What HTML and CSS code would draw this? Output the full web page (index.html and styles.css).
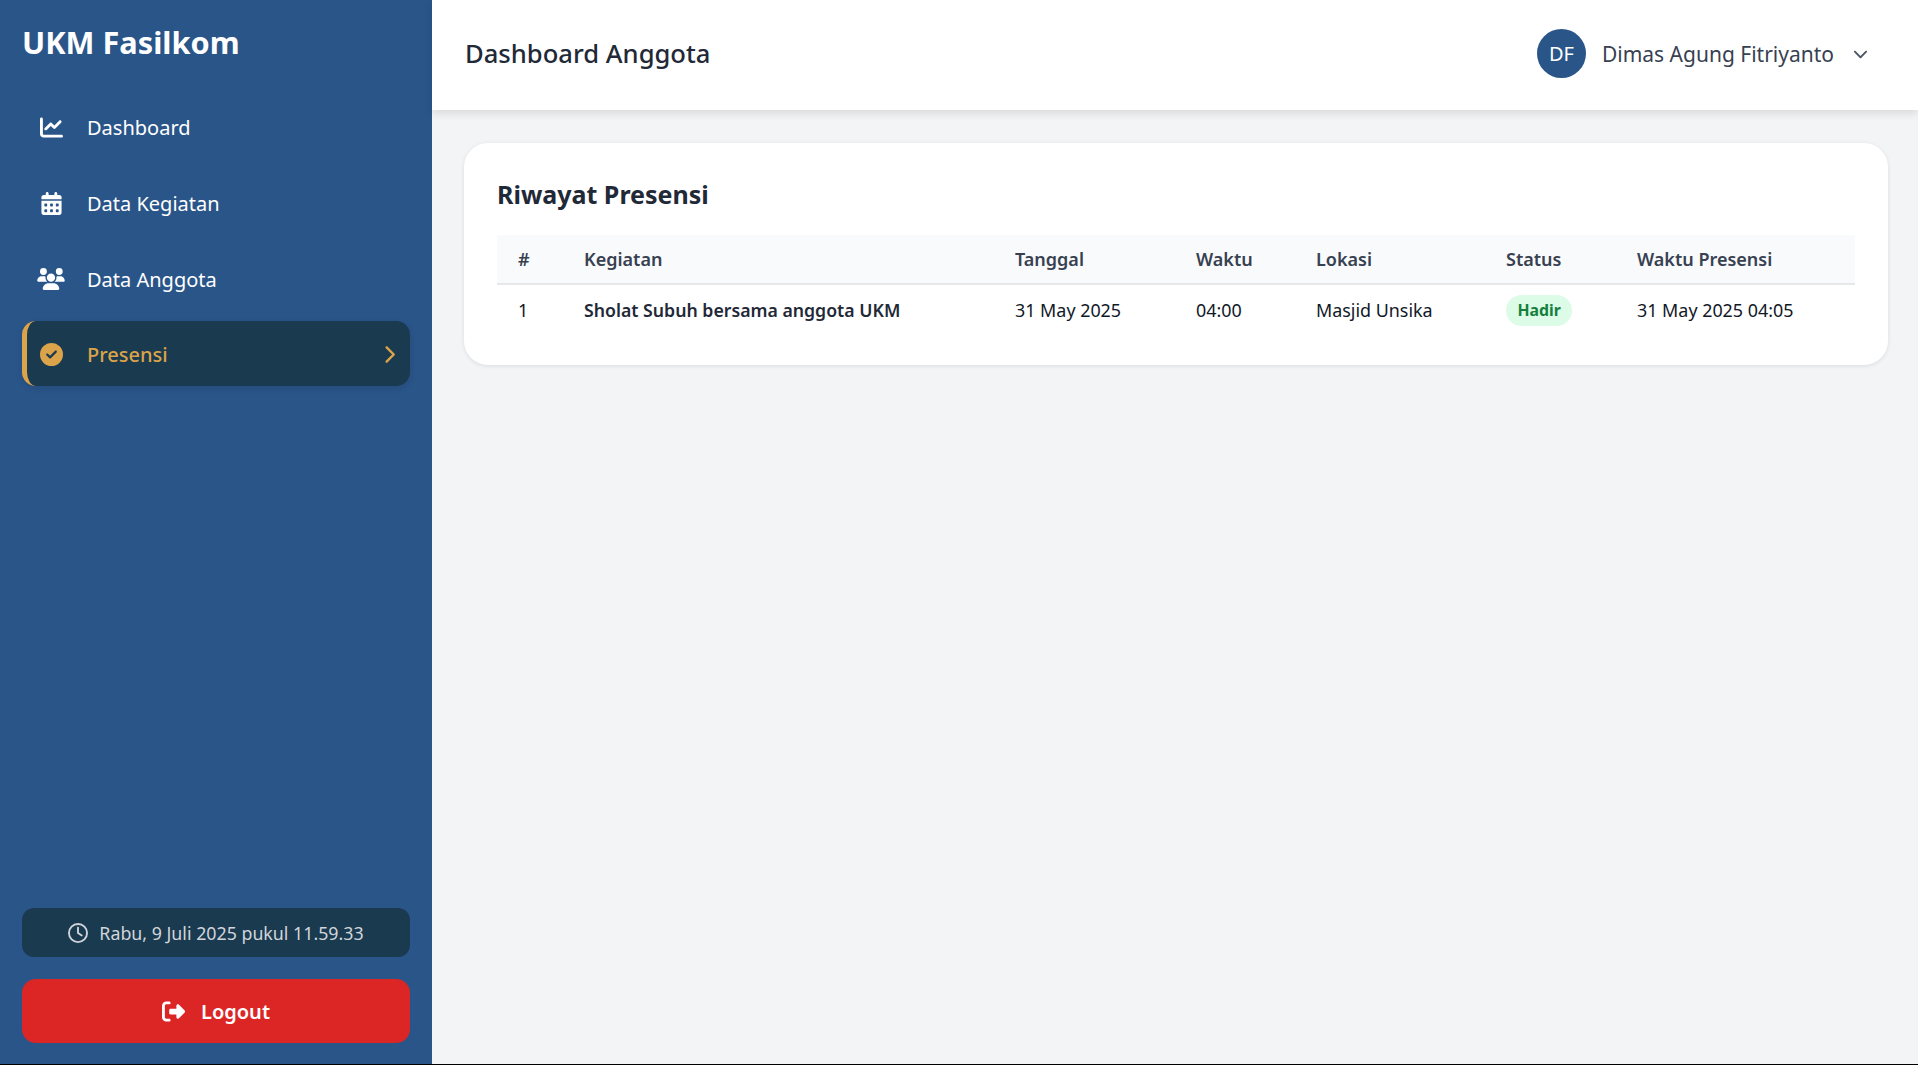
FILE: index.html
```html
<!DOCTYPE html>
<html lang="en">
<head>
    <meta charset="UTF-8">
    <meta name="viewport" content="width=device-width, initial-scale=1.0">
    <title>Dashboard Anggota</title>
    <link rel="stylesheet" href="styles.css">
</head>
<body>
    <div class="layout">
        <aside class="sidebar">
            <div class="brand">UKM Fasilkom</div>
            <nav class="nav">
                <a class="nav-item">
                    <span class="nav-icon">
                        <svg class="icon-chart" viewBox="0 0 512 512"><path d="M64 64c0-17.7-14.3-32-32-32S0 46.3 0 64V400c0 44.2 35.8 80 80 80H480c17.7 0 32-14.3 32-32s-14.3-32-32-32H80c-8.8 0-16-7.2-16-16V64zm406.6 86.6c12.5-12.5 12.5-32.8 0-45.3s-32.8-12.5-45.3 0L320 210.7l-57.4-57.4c-12.5-12.5-32.8-12.5-45.3 0l-112 112c-12.5 12.5-12.5 32.8 0 45.3s32.8 12.5 45.3 0L240 221.3l57.4 57.4c12.5 12.5 32.8 12.5 45.3 0l128-128z"/></svg>
                    </span>
                    <span>Dashboard</span>
                </a>
                <a class="nav-item">
                    <span class="nav-icon">
                        <svg class="icon-calendar" viewBox="0 0 448 512"><path d="M128 0c17.7 0 32 14.3 32 32V64H288V32c0-17.7 14.3-32 32-32s32 14.3 32 32V64h48c26.5 0 48 21.5 48 48v48H0V112C0 85.5 21.5 64 48 64H96V32c0-17.7 14.3-32 32-32zM0 192H448V464c0 26.5-21.5 48-48 48H48c-26.5 0-48-21.5-48-48V192zm64 80v32c0 8.8 7.2 16 16 16h32c8.8 0 16-7.2 16-16V272c0-8.8-7.2-16-16-16H80c-8.8 0-16 7.2-16 16zm128 0v32c0 8.8 7.2 16 16 16h32c8.8 0 16-7.2 16-16V272c0-8.8-7.2-16-16-16H208c-8.8 0-16 7.2-16 16zm144-16c-8.8 0-16 7.2-16 16v32c0 8.8 7.2 16 16 16h32c8.8 0 16-7.2 16-16V272c0-8.8-7.2-16-16-16H336zM64 400v32c0 8.8 7.2 16 16 16h32c8.8 0 16-7.2 16-16V400c0-8.8-7.2-16-16-16H80c-8.8 0-16 7.2-16 16zm144-16c-8.8 0-16 7.2-16 16v32c0 8.8 7.2 16 16 16h32c8.8 0 16-7.2 16-16V400c0-8.8-7.2-16-16-16H208zm112 16v32c0 8.8 7.2 16 16 16h32c8.8 0 16-7.2 16-16V400c0-8.8-7.2-16-16-16H336c-8.8 0-16 7.2-16 16z"/></svg>
                    </span>
                    <span>Data Kegiatan</span>
                </a>
                <a class="nav-item">
                    <span class="nav-icon">
                        <svg class="icon-users" viewBox="0 0 640 512"><path d="M144 0a80 80 0 1 1 0 160A80 80 0 1 1 144 0zM512 0a80 80 0 1 1 0 160A80 80 0 1 1 512 0zM0 298.7C0 239.8 47.8 192 106.7 192h42.7c15.9 0 31 3.5 44.6 9.7c-1.3 7.2-1.9 14.7-1.9 22.3c0 38.2 16.8 72.5 43.3 96c-.2 0-.4 0-.7 0H21.3C9.6 320 0 310.4 0 298.7zM405.3 320c-.2 0-.4 0-.7 0c26.6-23.5 43.3-57.8 43.3-96c0-7.6-.7-15-1.9-22.3c13.6-6.3 28.7-9.7 44.6-9.7h42.7C592.2 192 640 239.8 640 298.7c0 11.8-9.6 21.3-21.3 21.3H405.3zM224 224a96 96 0 1 1 192 0 96 96 0 1 1 -192 0zM128 485.3C128 411.7 187.7 352 261.3 352H378.7C452.3 352 512 411.7 512 485.3c0 14.7-11.9 26.7-26.7 26.7H154.7c-14.7 0-26.7-11.9-26.7-26.7z"/></svg>
                    </span>
                    <span>Data Anggota</span>
                </a>
                <a class="nav-item active">
                    <span class="nav-icon">
                        <svg class="icon-check" viewBox="0 0 512 512"><path d="M256 512A256 256 0 1 0 256 0a256 256 0 1 0 0 512zM369 209L241 337c-9.4 9.4-24.6 9.4-33.9 0l-64-64c-9.4-9.4-9.4-24.6 0-33.9s24.6-9.4 33.9 0l47 47L335 175c9.4-9.4 24.6-9.4 33.9 0s9.4 24.6 0 33.9z"/></svg>
                    </span>
                    <span>Presensi</span>
                    <svg class="icon-arrow" viewBox="0 0 320 512"><path d="M310.6 233.4c12.5 12.5 12.5 32.8 0 45.3l-192 192c-12.5 12.5-32.8 12.5-45.3 0s-12.5-32.8 0-45.3L242.7 256 73.4 86.6c-12.5-12.5-12.5-32.8 0-45.3s32.8-12.5 45.3 0l192 192z"/></svg>
                </a>
            </nav>
            <div class="sidebar-bottom">
                <div class="clock">
                    <svg class="icon-clock" viewBox="0 0 512 512"><path d="M464 256A208 208 0 1 1 48 256a208 208 0 1 1 416 0zM0 256a256 256 0 1 0 512 0A256 256 0 1 0 0 256zM232 120V256c0 8 4 15.5 10.7 20l96 64c11 7.4 25.9 4.4 33.3-6.7s4.4-25.9-6.7-33.3L280 243.2V120c0-13.3-10.7-24-24-24s-24 10.7-24 24z"/></svg>
                    <span>Rabu, 9 Juli 2025 pukul 11.59.33</span>
                </div>
                <button class="logout">
                    <svg class="icon-logout" viewBox="0 0 512 512"><path d="M377.9 105.9L500.7 228.7c7.2 7.2 11.3 17.1 11.3 27.3s-4.1 20.1-11.3 27.3L377.9 406.1c-6.4 6.4-15 9.9-24 9.9c-18.7 0-33.9-15.2-33.9-33.9l0-62.1-128 0c-17.7 0-32-14.3-32-32l0-64c0-17.7 14.3-32 32-32l128 0 0-62.1c0-18.7 15.2-33.9 33.9-33.9c9 0 17.6 3.6 24 9.9zM160 96L96 96c-17.7 0-32 14.3-32 32l0 256c0 17.7 14.3 32 32 32l64 0c17.7 0 32 14.3 32 32s-14.3 32-32 32l-64 0c-53 0-96-43-96-96L0 128C0 75 43 32 96 32l64 0c17.7 0 32 14.3 32 32s-14.3 32-32 32z"/></svg>
                    <span>Logout</span>
                </button>
            </div>
        </aside>
        <div class="content">
            <header class="topbar">
                <h1 class="page-title">Dashboard Anggota</h1>
                <div class="user">
                    <div class="avatar">DF</div>
                    <span class="user-name">Dimas Agung Fitriyanto</span>
                    <svg class="icon-down" viewBox="0 0 512 512"><path d="M233.4 406.6c12.5 12.5 32.8 12.5 45.3 0l192-192c12.5-12.5 12.5-32.8 0-45.3s-32.8-12.5-45.3 0L256 338.7 86.6 169.4c-12.5-12.5-32.8-12.5-45.3 0s-12.5 32.8 0 45.3l192 192z"/></svg>
                </div>
            </header>
            <main class="main">
                <section class="card">
                    <h2 class="card-title">Riwayat Presensi</h2>
                    <table class="table">
                        <colgroup>
                            <col class="col-no">
                            <col class="col-kegiatan">
                            <col class="col-tanggal">
                            <col class="col-waktu">
                            <col class="col-lokasi">
                            <col class="col-status">
                            <col>
                        </colgroup>
                        <thead>
                            <tr>
                                <th>#</th>
                                <th>Kegiatan</th>
                                <th>Tanggal</th>
                                <th>Waktu</th>
                                <th>Lokasi</th>
                                <th>Status</th>
                                <th>Waktu Presensi</th>
                            </tr>
                        </thead>
                        <tbody>
                            <tr>
                                <td>1</td>
                                <td class="strong">Sholat Subuh bersama anggota UKM</td>
                                <td>31 May 2025</td>
                                <td>04:00</td>
                                <td>Masjid Unsika</td>
                                <td class="badge-cell"><span class="badge">Hadir</span></td>
                                <td>31 May 2025 04:05</td>
                            </tr>
                        </tbody>
                    </table>
                </section>
            </main>
        </div>
    </div>
</body>
</html>
```

FILE: styles.css
```css
* {
    box-sizing: border-box;
}
html, body {
    height: 100%;
}
body {
    margin: 0;
    font-family: "Noto Sans", sans-serif;
    background-color: #f3f4f6;
    color: #111827;
    border-bottom: 1px solid #000;
}
svg {
    fill: currentColor;
    display: block;
    flex-shrink: 0;
}
.layout {
    display: flex;
    height: 100%;
}

/* sidebar */
.sidebar {
    width: 432px;
    flex-shrink: 0;
    display: flex;
    flex-direction: column;
    padding: 0 22px 21px;
    background-color: #2a5589;
    color: #fff;
}
.brand {
    height: 95px;
    padding-top: 21px;
    font-size: 30.7px;
    line-height: 43px;
    font-weight: 700;
}
.nav {
    display: flex;
    flex-direction: column;
}
.nav-item {
    display: flex;
    align-items: center;
    height: 64px;
    margin-bottom: 12px;
    padding-left: 15px;
    font-size: 20px;
    border-radius: 14px;
}
.nav-icon {
    width: 28px;
    margin-right: 22px;
    display: flex;
    justify-content: center;
}
.icon-chart, .icon-check {
    width: 23px;
    height: 23px;
}
.icon-calendar {
    width: 21px;
    height: 23px;
}
.icon-users {
    width: 28px;
    height: 22px;
}
.nav-item.active {
    height: 65px;
    margin-top: -2px;
    padding-left: 10px;
    padding-top: 1px;
    background-color: #1a3a4f;
    border-left: 5px solid #dba34a;
    color: #dba34a;
    font-weight: 500;
    box-shadow: 0 2px 6px rgba(0, 0, 0, 0.12);
}
.icon-arrow {
    width: 12px;
    height: 19px;
    margin-left: auto;
    margin-right: 15px;
}
.sidebar-bottom {
    margin-top: auto;
    display: flex;
    flex-direction: column;
    gap: 22px;
}
.clock {
    display: flex;
    align-items: center;
    justify-content: center;
    gap: 11px;
    height: 49px;
    border-radius: 12px;
    background-color: #1a3a4f;
    color: #d1d5db;
    font-size: 17.8px;
}
.icon-clock {
    width: 20px;
    height: 20px;
}
.logout {
    display: flex;
    align-items: center;
    justify-content: center;
    gap: 16px;
    height: 64px;
    padding-top: 2px;
    border: none;
    border-radius: 14px;
    background-color: #dc2626;
    color: #fff;
    font-family: inherit;
    font-size: 20px;
    font-weight: 600;
}
.icon-logout {
    width: 23px;
    height: 23px;
}

/* header */
.content {
    flex: 1;
    display: flex;
    flex-direction: column;
    min-width: 0;
}
.topbar {
    height: 110px;
    display: flex;
    align-items: center;
    justify-content: space-between;
    padding: 0 50px 3px 33px;
    background-color: #fff;
    box-shadow: 0 4px 8px rgba(0, 0, 0, 0.1);
}
.page-title {
    margin: 0;
    font-size: 25.6px;
    font-weight: 500;
    color: #1f2937;
}
.user {
    display: flex;
    align-items: center;
}
.avatar {
    width: 49px;
    height: 49px;
    margin-right: 16px;
    border-radius: 50%;
    display: flex;
    align-items: center;
    justify-content: center;
    background-color: #2a5589;
    color: #fff;
    font-size: 20px;
}
.user-name {
    font-size: 21px;
    color: #374151;
}
.icon-down {
    width: 15px;
    height: 15px;
    margin-left: 19px;
    color: #4b5563;
}

/* card + table */
.main {
    padding: 33px 30px 0 32px;
}
.card {
    height: 222px;
    padding: 33px;
    background-color: #fff;
    border-radius: 24px;
    box-shadow: 0 1px 4px rgba(0, 0, 0, 0.1);
}
.card-title {
    margin: 0;
    height: 59px;
    font-size: 25px;
    line-height: 36px;
    font-weight: 700;
    color: #1f2937;
}
.table {
    width: 100%;
    border-collapse: collapse;
    table-layout: fixed;
    font-size: 17.9px;
}
.col-no { width: 66px; }
.col-kegiatan { width: 431px; }
.col-tanggal { width: 181px; }
.col-waktu { width: 120px; }
.col-lokasi { width: 190px; }
.col-status { width: 131px; }
.table th {
    height: 49px;
    padding: 0 21px;
    text-align: left;
    font-size: 18px;
    font-weight: 600;
    color: #374151;
    background-color: #f9fafb;
    border-bottom: 2px solid #e5e7eb;
}
.table td {
    height: 52px;
    padding: 0 21px 2px;
    color: #111827;
}
.table td.strong {
    font-size: 17.7px;
    font-weight: 600;
    color: #1f2937;
}
.table td.badge-cell {
    padding-bottom: 0;
}
.badge {
    display: inline-block;
    height: 31px;
    line-height: 31px;
    padding: 0 11.5px;
    border-radius: 16px;
    background-color: #dcfce7;
    color: #15803d;
    font-size: 15.8px;
    font-weight: 700;
}
```
